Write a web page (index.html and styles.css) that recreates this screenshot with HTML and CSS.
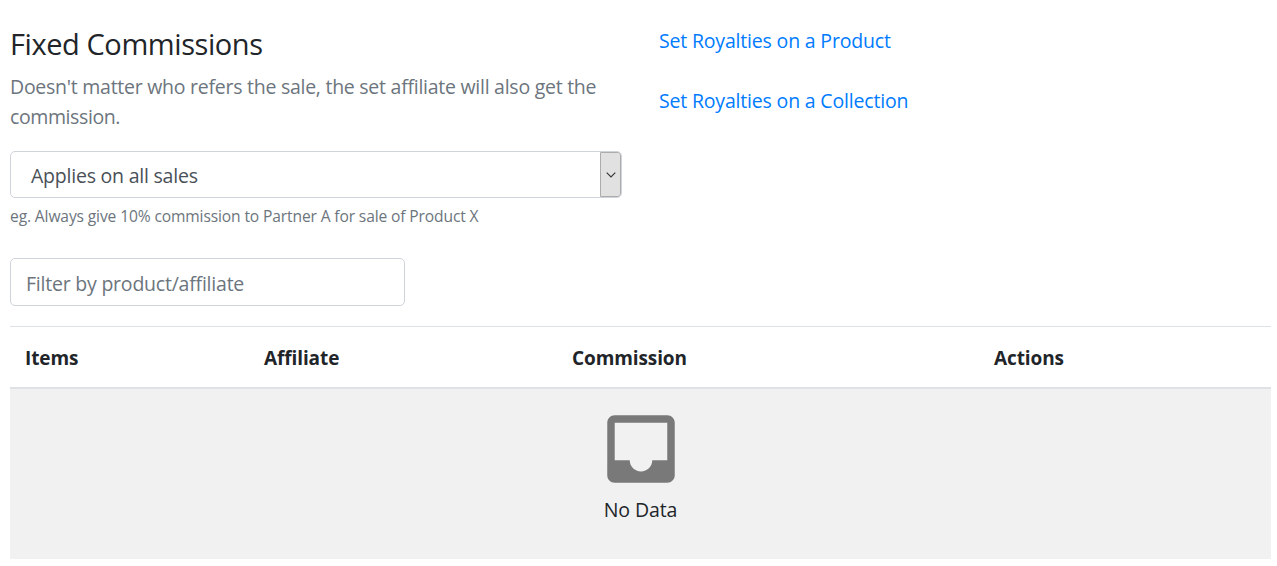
FILE: index.html
```html
<!DOCTYPE html>
<html lang="en">
<head>
<meta charset="utf-8">
<title>Fixed Commissions</title>
<link rel="stylesheet" href="styles.css">
</head>
<body>
<main class="page">
  <section class="intro">
    <div class="settings">
      <h1 class="title">Fixed Commissions</h1>
      <p class="lead">Doesn't matter who refers the sale, the set affiliate will also get the<br><span class="lead-end">commission.</span></p>
      <div class="select" role="combobox" aria-label="Applies on" aria-expanded="false" tabindex="0">
        <span class="select-value">Applies on all sales</span>
        <span class="select-arrow">
          <svg width="10" height="6" viewBox="0 0 10 6"><path d="M0.7 0.7 5 5 9.3 0.7" fill="none" stroke="#333" stroke-width="1.1"/></svg>
        </span>
      </div>
      <p class="hint">eg. Always give 10% commission to Partner A for sale of Product X</p>
    </div>
    <nav class="links">
      <a class="link" href="#product">Set Royalties on a Product</a>
      <a class="link" href="#collection">Set Royalties on a Collection</a>
    </nav>
  </section>
  <input class="filter" type="text" placeholder="Filter by product/affiliate">
  <table class="table">
    <thead>
      <tr>
        <th class="col-items">Items</th>
        <th class="col-affiliate">Affiliate</th>
        <th class="col-commission">Commission</th>
        <th class="col-actions">Actions</th>
      </tr>
    </thead>
    <tbody>
      <tr>
        <td class="empty" colspan="4">
          <svg class="empty-icon" viewBox="0 0 24 24"><path fill="#797979" d="M19 3H4.99C3.88 3 3.01 3.89 3.01 5L3 19c0 1.1.88 2 1.99 2H19c1.1 0 2-.9 2-2V5c0-1.11-.9-2-2-2zm0 12h-4c0 1.66-1.35 3-3 3s-3-1.34-3-3H4.99V5H19v10z"/></svg>
          <p class="empty-text">No Data</p>
        </td>
      </tr>
    </tbody>
  </table>
</main>
</body>
</html>
```
FILE: styles.css
```css
* { box-sizing: border-box; }
body {
  margin: 0;
  background: #fff;
  color: #212529;
  font-family: "Open Sans", "Noto Sans", sans-serif;
  font-size: 19.5px;
  line-height: 30px;
}
p, h1 { margin: 0; }
.page { padding: 26px 6px 0 10px; }
.intro { display: flex; gap: 37px; }
.settings { width: 612px; }
.title { font-size: 29px; font-weight: 400; line-height: 36px; letter-spacing: -0.42px; margin-bottom: 10px; }
.lead { color: #6c757d; white-space: nowrap; letter-spacing: -0.26px; }
.lead-end { letter-spacing: -0.4px; }
.select {
  display: flex;
  height: 47px;
  margin-top: 19px;
  border: 1px solid #ced4da;
  border-radius: 5px;
  overflow: hidden;
  color: #495057;
  letter-spacing: -0.22px;
}
.select-value { flex: 1; padding: 9px 20px 0; }
.select-arrow {
  display: flex;
  align-items: center;
  justify-content: center;
  width: 21px;
  border: 1px solid #acacac;
  border-radius: 0 3px 3px 0;
  background: #e1e1e1;
}
.hint { margin-top: 6px; color: #6c757d; font-size: 15.6px; line-height: 24px; letter-spacing: -0.13px; white-space: nowrap; }
.links { display: flex; flex-direction: column; gap: 30px; letter-spacing: -0.18px; }
.link { color: #007bff; text-decoration: none; }
.filter {
  display: block;
  width: 395px;
  height: 48px;
  margin-top: 30px;
  padding: 3px 15px 0;
  border: 1px solid #ced4da;
  border-radius: 5px;
  font: inherit;
  letter-spacing: -0.22px;
}
.filter::placeholder { color: #6c757d; opacity: 1; }
.table { width: 100%; margin-top: 20px; border-spacing: 0; table-layout: fixed; }
.table th {
  height: 63px;
  padding: 2px 15px 0;
  border-top: 1px solid #dee2e6;
  border-bottom: 2px solid #dee2e6;
  text-align: left;
  font-size: 19px;
  font-weight: 700;
  letter-spacing: -0.1px;
}
.col-items { width: 239px; }
.col-affiliate { width: 308px; }
.col-commission { width: 422px; }
.empty { height: 170px; padding: 15px 0 0; background: #f1f1f1; text-align: center; vertical-align: top; }
.empty-icon { display: block; width: 90px; height: 90px; margin: 0 auto; }
.empty-text { padding-top: 1px; letter-spacing: -0.1px; }
```
